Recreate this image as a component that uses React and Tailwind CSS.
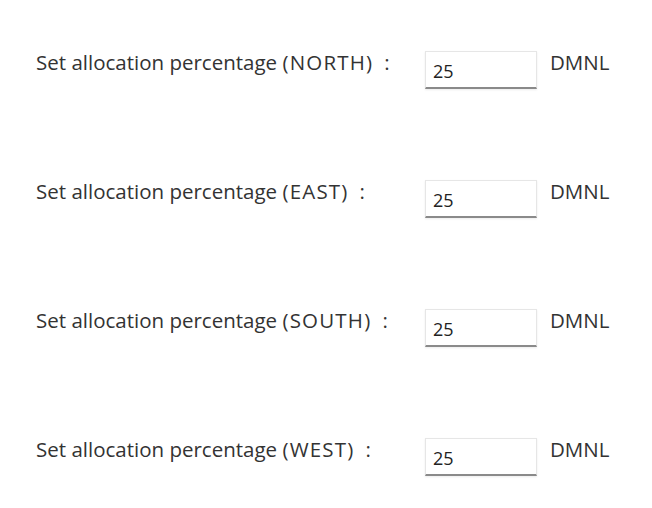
const rows = ['NORTH', 'EAST', 'SOUTH', 'WEST'];

export default function App() {
  return (
    <div className="w-[652px] h-[508px] bg-white pt-[43px] pl-[36px] font-['Open_Sans',sans-serif] text-[#333]">
      <div className="flex flex-col gap-[91px]">
        {rows.map((r) => (
          <div key={r} className="flex items-start h-[38px]">
            <div className="w-[389px] text-[20.5px] leading-[38px] whitespace-nowrap">
              Set allocation percentage <span className="tracking-[1.2px]">({r})</span>
              <span className="ml-[11px]">:</span>
            </div>
            <input
              readOnly
              value="25"
              className="w-[112px] h-[38px] mt-[8px] border border-[#e6e6e6] border-b-2 border-b-[#8a8a8a] px-[7px] pt-[3px] text-[18px] text-[#222] outline-none shadow-[0_1px_2px_rgba(0,0,0,0.08)]"
            />
            <div className="ml-[13px] text-[20.5px] leading-[38px]">DMNL</div>
          </div>
        ))}
      </div>
    </div>
  );
}
